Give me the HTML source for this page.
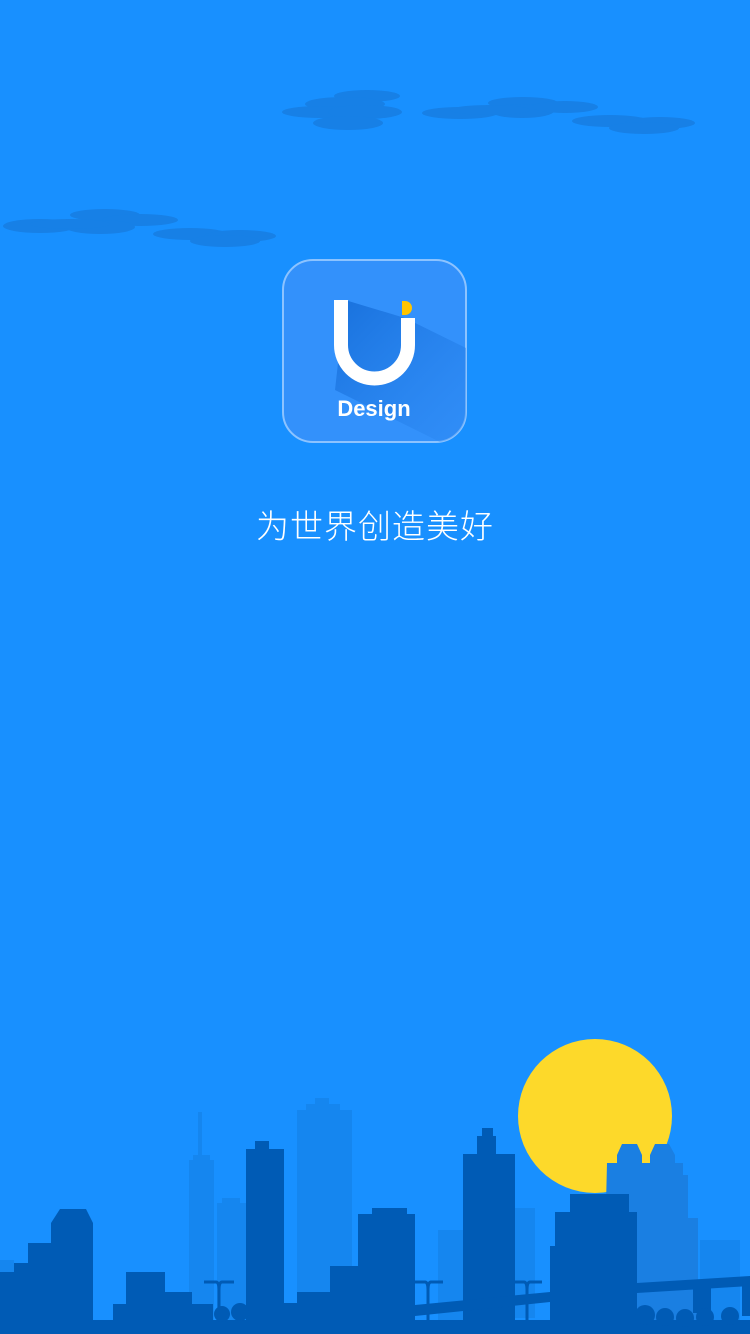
<!DOCTYPE html>
<html><head><meta charset="utf-8"><style>
html,body{margin:0;padding:0;width:750px;height:1334px;overflow:hidden;background:#1890ff;}
.t{position:absolute;left:0;width:750px;top:500px;text-align:center;color:#fff;font-family:"Liberation Sans","Noto Sans CJK SC",sans-serif;font-size:33px;font-weight:300;letter-spacing:1px;}
</style></head><body>
<svg width="750" height="1334" style="position:absolute;left:0;top:0">
<defs>
<linearGradient id="sh" x1="0" y1="0" x2="1" y2="1"><stop offset="0" stop-color="#0d63cf" stop-opacity=".7"/><stop offset="1" stop-color="#2a86f0" stop-opacity=".3"/></linearGradient>
<clipPath id="ic"><rect x="283" y="260" width="183" height="182" rx="30"/></clipPath>
</defs>
<rect width="750" height="1334" fill="#1890ff"/>
<g fill="#1780e6">
<ellipse cx="367" cy="96" rx="33" ry="6"/><ellipse cx="345" cy="104" rx="40" ry="7"/><ellipse cx="320" cy="112" rx="38" ry="6"/><ellipse cx="365" cy="112" rx="37" ry="7"/><ellipse cx="348" cy="123" rx="35" ry="7"/>
<ellipse cx="460" cy="113" rx="38" ry="6"/><ellipse cx="523" cy="103" rx="35" ry="6"/><ellipse cx="522" cy="111" rx="32" ry="7"/><ellipse cx="565" cy="107" rx="33" ry="6"/><ellipse cx="490" cy="110" rx="40" ry="5"/>
<ellipse cx="610" cy="121" rx="38" ry="6"/><ellipse cx="660" cy="123" rx="35" ry="6"/><ellipse cx="644" cy="128" rx="35" ry="6"/>
<ellipse cx="40" cy="226" rx="37" ry="7"/><ellipse cx="105" cy="215" rx="35" ry="6"/><ellipse cx="140" cy="220" rx="38" ry="6"/><ellipse cx="100" cy="227" rx="35" ry="7"/><ellipse cx="70" cy="224" rx="40" ry="5"/>
<ellipse cx="190" cy="234" rx="37" ry="6"/><ellipse cx="240" cy="236" rx="36" ry="6"/><ellipse cx="225" cy="241" rx="35" ry="6"/>
</g>
<rect x="283" y="260" width="183" height="182" rx="30" fill="#3391fb" stroke="#8cc3ff" stroke-width="2"/>
<g clip-path="url(#ic)"><polygon points="345,300 405,318 470,350 470,442 440,442 335,390" fill="url(#sh)"/></g>
<path d="M341,300 V345 A33.5,33.5 0 0 0 408,345 V318" fill="none" stroke="#fff" stroke-width="14"/>
<path d="M402,301 h3 a7,7 0 0 1 0,14 h-3 z" fill="#ffc400"/>
<text x="374" y="416" text-anchor="middle" fill="#fff" font-family="Liberation Sans,sans-serif" font-size="22" font-weight="bold">Design</text>
<circle cx="595" cy="1116" r="77" fill="#fdd92a"/>
<g fill="#1586ef">
<rect x="198" y="1112" width="4" height="60"/><rect x="189" y="1160" width="25" height="170"/><rect x="193" y="1155" width="17" height="10"/>
<rect x="217" y="1203" width="29" height="120"/><rect x="222" y="1198" width="18" height="8"/>
<rect x="297" y="1110" width="55" height="220"/><rect x="306" y="1104" width="34" height="10"/><rect x="315" y="1098" width="14" height="8"/>
<rect x="515" y="1208" width="20" height="110"/>
<rect x="438" y="1230" width="30" height="90"/>
<rect x="700" y="1240" width="40" height="80"/>
<rect x="0" y="1260" width="14" height="30"/>
</g>
<path fill="#1a7fe2" d="M607,1163 h10 v-8 l5,-11 h15 l5,11 v8 h8 v-8 l5,-11 h14 l6,11 v8 h8 v12 h5 v43 h10 v110 h-95z"/>
<g fill="#005bb5">
<path d="M0,1272 h14 v-9 h14 v-20 h23 v-20 l9,-14 h26 l7,14 v111 h-93z"/>
<rect x="95" y="1321" width="20" height="13"/>
<rect x="113" y="1304" width="13" height="30"/><rect x="126" y="1272" width="39" height="62"/><rect x="165" y="1292" width="27" height="42"/><rect x="192" y="1304" width="21" height="30"/>
<rect x="246" y="1149" width="38" height="185"/><rect x="255" y="1141" width="14" height="10"/>
<rect x="284" y="1303" width="13" height="31"/><rect x="297" y="1292" width="33" height="42"/><rect x="330" y="1266" width="28" height="68"/><rect x="358" y="1214" width="57" height="120"/><rect x="372" y="1208" width="35" height="8"/>
<rect x="463" y="1154" width="52" height="180"/><rect x="477" y="1136" width="19" height="20"/><rect x="482" y="1128" width="11" height="10"/>
<rect x="550" y="1246" width="20" height="88"/><rect x="555" y="1212" width="82" height="122"/><rect x="570" y="1194" width="59" height="20"/>
<polygon points="415,1305 550,1292 550,1302 415,1316"/>
<polygon points="637,1283 750,1276 750,1286 637,1293"/>
<rect x="693" y="1288" width="18" height="25"/><rect x="742" y="1286" width="8" height="30"/>
<rect x="0" y="1320" width="750" height="14"/>
<circle cx="222" cy="1314" r="8"/><circle cx="240" cy="1312" r="9"/><circle cx="645" cy="1315" r="10"/><circle cx="665" cy="1317" r="9"/><circle cx="685" cy="1318" r="9"/><circle cx="705" cy="1317" r="9"/><circle cx="730" cy="1316" r="9"/>
<g stroke="#005bb5" stroke-width="3" fill="none">
<path d="M219,1320 v-30 M204,1282 h12 q3,0 3,8 q0,-8 3,-8 h12"/>
<path d="M428,1320 v-30 M413,1282 h12 q3,0 3,8 q0,-8 3,-8 h12"/>
<path d="M527,1320 v-30 M514,1282 h10 q3,0 3,8 q0,-8 3,-8 h12"/>
</g>
</g>
</svg>
<div class="t">为世界创造美好</div>
</body></html>
